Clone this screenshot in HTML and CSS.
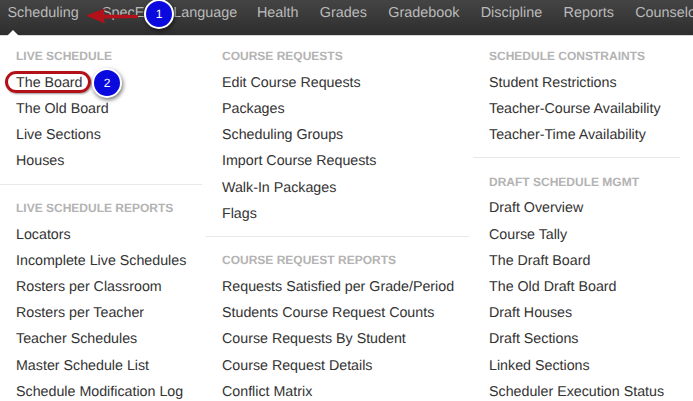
FILE: index.html
```html
<!DOCTYPE html>
<html lang="en">
<head>
<meta charset="utf-8">
<title>Scheduling menu</title>
<link rel="stylesheet" href="styles.css">
</head>
<body>
<nav class="nav">
  <a class="nav-item">Scheduling</a>
  <a class="nav-item n2">SpecEd</a>
  <a class="nav-item n3">Language</a>
  <a class="nav-item">Health</a>
  <a class="nav-item">Grades</a>
  <a class="nav-item">Gradebook</a>
  <a class="nav-item">Discipline</a>
  <a class="nav-item">Reports</a>
  <a class="nav-item">Counselor</a>
</nav>
<main class="menu">
  <section class="col col-a">
    <h3 class="head">LIVE SCHEDULE</h3>
    <a class="item">The Board</a>
    <a class="item">The Old Board</a>
    <a class="item">Live Sections</a>
    <a class="item">Houses</a>
    <hr class="rule">
    <h3 class="head">LIVE SCHEDULE REPORTS</h3>
    <a class="item">Locators</a>
    <a class="item">Incomplete Live Schedules</a>
    <a class="item">Rosters per Classroom</a>
    <a class="item">Rosters per Teacher</a>
    <a class="item">Teacher Schedules</a>
    <a class="item">Master Schedule List</a>
    <a class="item">Schedule Modification Log</a>
  </section>
  <section class="col col-b">
    <h3 class="head">COURSE REQUESTS</h3>
    <a class="item">Edit Course Requests</a>
    <a class="item">Packages</a>
    <a class="item">Scheduling Groups</a>
    <a class="item">Import Course Requests</a>
    <a class="item">Walk-In Packages</a>
    <a class="item">Flags</a>
    <hr class="rule">
    <h3 class="head">COURSE REQUEST REPORTS</h3>
    <a class="item">Requests Satisfied per Grade/Period</a>
    <a class="item">Students Course Request Counts</a>
    <a class="item">Course Requests By Student</a>
    <a class="item">Course Request Details</a>
    <a class="item">Conflict Matrix</a>
  </section>
  <section class="col col-c">
    <h3 class="head">SCHEDULE CONSTRAINTS</h3>
    <a class="item">Student Restrictions</a>
    <a class="item">Teacher-Course Availability</a>
    <a class="item">Teacher-Time Availability</a>
    <hr class="rule">
    <h3 class="head">DRAFT SCHEDULE MGMT</h3>
    <a class="item">Draft Overview</a>
    <a class="item">Course Tally</a>
    <a class="item">The Draft Board</a>
    <a class="item">The Old Draft Board</a>
    <a class="item">Draft Houses</a>
    <a class="item">Draft Sections</a>
    <a class="item">Linked Sections</a>
    <a class="item">Scheduler Execution Status</a>
  </section>
</main>
<svg class="caret" width="20" height="8" viewBox="0 0 20 8"><path d="M2 7 L9 0 L16 7 Z" fill="#fff"/></svg>
<svg class="arrow" width="54" height="18" viewBox="0 0 54 18"><path d="M0 7.5 L19 0.5 L17.5 6.5 L52 7 L52 10 L17.5 10.5 L19 15.5 Z" fill="#b3111a"/></svg>
<div class="badge badge-1">1</div>
<div class="highlight"></div>
<div class="badge badge-2">2</div>
</body>
</html>
```
FILE: styles.css
```css
* { box-sizing: border-box; }
html, body { margin: 0; padding: 0; }
body {
  width: 693px;
  height: 401px;
  overflow: hidden;
  background: #fff;
  font-family: "Liberation Sans", Arial, sans-serif;
  text-rendering: geometricPrecision;
  position: relative;
}
.nav {
  height: 36px;
  display: flex;
  align-items: flex-start;
  gap: 21.25px;
  white-space: nowrap;
  overflow: hidden;
  padding: 3.5px 0 0 7.5px;
  background: linear-gradient(#444, #2e2e2e);
  border-bottom: 1px solid #d6d6d6;
}
.nav-item {
  font-size: 14.4px;
  line-height: 18px;
  color: #bababa;
  flex: none;
}
.n2 { margin: 0 -2px 0 2px; }
.n3 { margin: 0 -1.5px 0 1.5px; }
.menu {
  display: flex;
  align-items: flex-start;
  padding-top: 11px;
}
.col { flex: none; }
.col-a { width: 202px; }
.col-b { width: 263px; margin-left: 4px; }
.col-c { width: 207px; margin-left: 4px; }
.head {
  margin: 0;
  padding-left: 16px;
  font-size: 12px;
  line-height: 18px;
  height: 22.9px;
  font-weight: bold;
  color: #b3b3b3;
}
.item {
  display: block;
  padding-left: 16px;
  font-size: 14.25px;
  line-height: 26.2px;
  height: 26.2px;
  color: #333;
  white-space: nowrap;
}
.rule {
  margin: 9px 0 14.1px;
  border: 0;
  height: 1px;
  background: #e8e8e8;
}
.caret { position: absolute; left: 4px; top: 30px; }
.arrow { position: absolute; left: 86px; top: 8px; }
.badge {
  position: absolute;
  width: 30px;
  height: 30px;
  border-radius: 50%;
  background: #0a0adf;
  border: 2px solid #fff;
  box-shadow: 1px 2px 4px rgba(0,0,0,.55);
  color: #fff;
  font-size: 12px;
  line-height: 26px;
  text-align: center;
}
.badge-1 { left: 144px; top: -1px; }
.badge-2 { left: 92px; top: 68px; }
.highlight {
  position: absolute;
  left: 5px;
  top: 71px;
  width: 86px;
  height: 22px;
  border: 3px solid #b3111a;
  border-radius: 11px;
  box-shadow: 1px 1px 2px rgba(0,0,0,.4);
}
```
